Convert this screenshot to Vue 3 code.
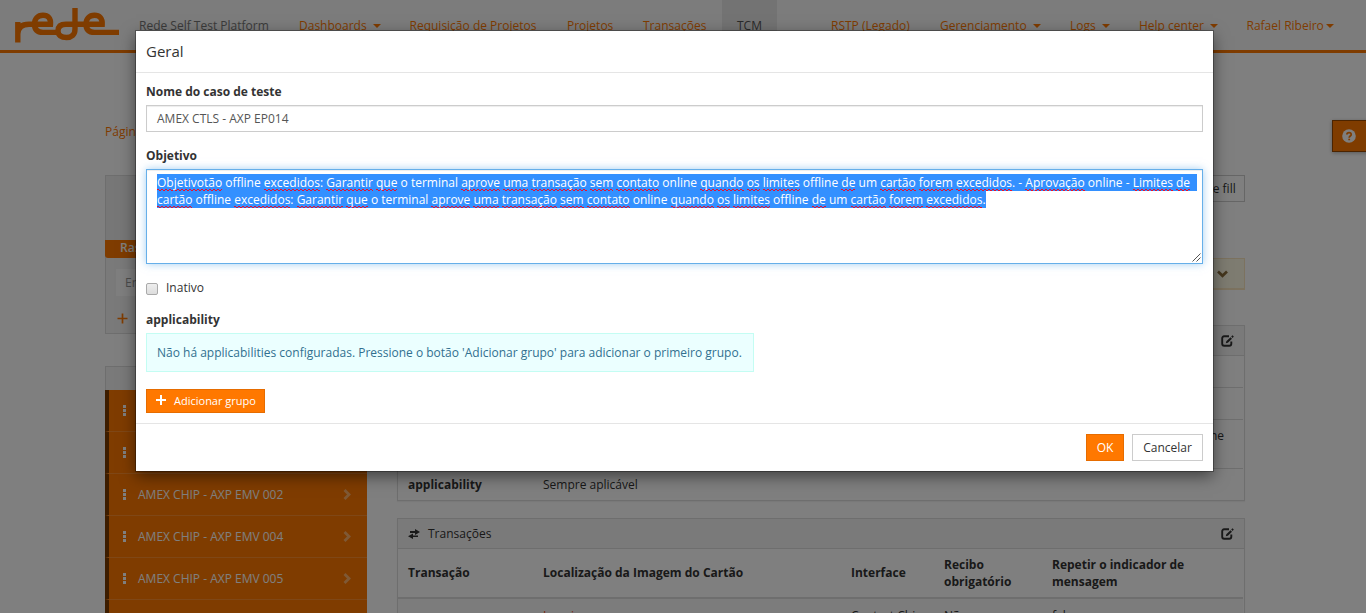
<script setup>
const leftNav = [
  { t: 'Rede Self Test Platform', w: 160, brand: true },
  { t: 'Dashboards', w: 110.5, caret: true },
  { t: 'Requisição de Projetos', w: 157.5 },
  { t: 'Projetos', w: 76 },
  { t: 'Transações', w: 94 },
  { t: 'TCM', w: 55, active: true }
]
const rightNav = [
  { t: 'RSTP (Legado)', w: 109 },
  { t: 'Gerenciamento', w: 130, caret: true },
  { t: 'Logs', w: 69, caret: true },
  { t: 'Help center', w: 107.5, caret: true },
  { t: 'Rafael Ribeiro', w: 120, caret: true, tight: true }
]
const cases = ['AMEX CHIP - AXP EMV 000', 'AMEX CHIP - AXP EMV 001', 'AMEX CHIP - AXP EMV 002', 'AMEX CHIP - AXP EMV 004', 'AMEX CHIP - AXP EMV 005']
const known = ['offline', 'o', 'terminal', 'online', 'um', '-']
const split = s => s.split(' ').map(w => {
  const m = w.match(/^(.*?)([:.]?)$/)
  return { word: m[1], tail: m[2], bad: !known.includes(m[1]) }
})
const lines = [
  split('Objetivotão offline excedidos: Garantir que o terminal aprove uma transação sem contato online quando os limites offline de um cartão forem excedidos. - Aprovação online - Limites de'),
  split('cartão offline excedidos: Garantir que o terminal aprove uma transação sem contato online quando os limites offline de um cartão forem excedidos.')
]
</script>

<template>
  <div class="page">
    <header class="navbar">
      <svg class="logo" width="124" height="50" viewBox="0 0 124 50" fill="none" stroke="#ff7800" stroke-width="5.4">
        <path d="M17.8 42.5V22M17.8 34C18 27 22 24.3 29 24.3H50.5C51 18.5 48 15.2 43 15.2C37.500 15.200 34.500 19 34.500 24C34.500 29.500 37.500 32.400 43 32.400H56" />
        <path d="M75 8V29C75 35 71.500 37.500 66.500 37.500C61 37.500 58 35 58 31C58 26.500 61 24.300 66 24.300H102.200C102.500 18.500 99.500 15.200 94.500 15.200C89 15.200 86 19 86 24C86 29.500 89 32.400 94.500 32.400H119" />
      </svg>
      <nav class="nav">
        <a v-for="n in leftNav" :key="n.t" :class="{ brand: n.brand, active: n.active }" :style="{ width: n.w + 'px' }">{{ n.t }}<i v-if="n.caret" class="caret"></i></a>
      </nav>
      <nav class="nav right">
        <a v-for="n in rightNav" :key="n.t" :style="{ width: n.w + 'px' }">{{ n.t }}<i v-if="n.caret" class="caret" :class="{ tight: n.tight }"></i></a>
      </nav>
    </header>

    <div class="help">
      <svg width="14" height="14" viewBox="0 0 14 14"><circle cx="7" cy="7" r="6.8" fill="#fff" /><path d="M4.900 5.500C5 3 9.200 3 9.200 5.400C9.200 7 7.200 7 7.200 8.700M7.200 9.700V11.300" fill="none" stroke="#ff7800" stroke-width="1.8" /></svg>
    </div>

    <main class="cols">
      <aside class="side">
        <div class="crumb">Página inicial</div>
        <div class="well">
          <div class="blank"></div>
          <div class="status">Rascunho</div>
          <div class="tags">
            <div class="field">Enter a tag</div>
            <svg width="11" height="11" viewBox="0 0 11 11"><path d="M5.500 0.500V10.500M0.500 5.500H10.500" stroke="#ff7800" stroke-width="1.700" /></svg>
          </div>
        </div>
        <div class="list">
          <div class="list-head"></div>
          <div v-for="c in cases" :key="c" class="case">
            <svg class="dots" width="3" height="11" viewBox="0 0 3 11" fill="#fff"><path d="M0 0H3V3H0ZM0 4H3V7H0ZM0 8H3V11H0Z" /></svg>
            <span>{{ c }}</span>
            <svg class="chev" width="9" height="11" viewBox="0 0 9 11"><path d="M1.500 1L6 5.500L1.500 10" fill="none" stroke="#ffb26b" stroke-width="2.800" /></svg>
          </div>
          <div class="case"></div>
        </div>
      </aside>

      <section class="content">
        <div class="fill-btn">Auto-complete fill</div>
        <div class="warn"><svg width="11" height="8" viewBox="0 0 11 8"><path d="M1 1.500L5.500 5.800L10 1.500" fill="none" stroke="#8a6d3b" stroke-width="2.700" /></svg></div>
        <div class="panel first">
          <div class="phead"><span></span>
            <svg class="edit" width="13" height="12" viewBox="0 0 13 12"><path d="M8 1.300H3.200Q1.200 1.300 1.200 3.300V8.800Q1.200 10.800 3.200 10.800H8.300Q10.300 10.800 10.300 8.800V6.500" fill="none" stroke="#333" stroke-width="1.900" /><path d="M4.800 8.300L5.300 6.300L9.500 2.200L11 3.700L6.900 7.700ZM10.200 1.500L11.500 0.300L12.800 1.600L11.600 2.900Z" fill="#333" /></svg>
          </div>
          <div class="row r1"></div>
          <div class="row r1"></div>
          <div class="row r2">ne</div>
          <div class="row r3"><b>applicability</b><span>Sempre aplicável</span></div>
        </div>
        <div class="panel second">
          <div class="phead">
            <span class="ptitle"><svg width="12" height="10" viewBox="0 0 12 10" fill="#333"><path d="M2 2H7V0L12 3L7 6V4H2ZM10 6.500H5V4.500L0 7.300L5 10V8H10Z" /></svg>Transações</span>
            <svg class="edit" width="13" height="12" viewBox="0 0 13 12"><path d="M8 1.300H3.200Q1.200 1.300 1.200 3.300V8.800Q1.200 10.800 3.200 10.800H8.300Q10.300 10.800 10.300 8.800V6.500" fill="none" stroke="#333" stroke-width="1.900" /><path d="M4.800 8.300L5.300 6.300L9.500 2.200L11 3.700L6.900 7.700ZM10.200 1.500L11.500 0.300L12.800 1.600L11.600 2.900Z" fill="#333" /></svg>
          </div>
          <div class="tr th"><span>Transação</span><span>Localização da Imagem do Cartão</span><span>Interface</span><span>Recibo<br>obrigatório</span><span>Repetir o indicador de<br>mensagem</span></div>
          <div class="tr td"><span></span><span class="link">Inserir</span><span>Contact Chip</span><span>Não</span><span>false</span></div>
        </div>
      </section>
    </main>

    <div class="backdrop"></div>

    <div class="modal">
      <div class="mhead">Geral</div>
      <div class="mbody">
        <label class="lab">Nome do caso de teste</label>
        <div class="input">AMEX CTLS - AXP EP014</div>
        <label class="lab l2">Objetivo</label>
        <div class="area">
          <div v-for="(l, i) in lines" :key="i" class="line" :class="'n' + i"><template v-for="(w, j) in l" :key="j"><span :class="{ bad: w.bad }">{{ w.word }}</span>{{ w.tail }}{{ j < l.length - 1 ? ' ' : '' }}</template></div>
          <svg class="grip" width="9" height="9" viewBox="0 0 9 9"><path d="M0.500 8.500L8.500 0.500M4.500 8.500L8.500 4.500" stroke="#555" stroke-width="1" /></svg>
        </div>
        <div class="check"><i></i><span>Inativo</span></div>
        <label class="lab l3">applicability</label>
        <div class="info"><span>Não há applicabilities configuradas. Pressione o botão 'Adicionar grupo' para adicionar o primeiro grupo.</span></div>
        <div class="add"><svg width="10" height="10" viewBox="0 0 10 10"><path d="M5 0V10M0 5H10" stroke="#fff" stroke-width="2" /></svg><span>Adicionar grupo</span></div>
      </div>
      <div class="mfoot"><div class="btn ok">OK</div><div class="btn cancel">Cancelar</div></div>
    </div>
  </div>
</template>

<style>
body { margin: 0; overflow: hidden; background: #fff; }
</style>

<style scoped>
* { box-sizing: border-box; }
.page { position: relative; width: 1366px; height: 613px; overflow: hidden; background: #fff; font: 12px/17px "Open Sans", sans-serif; color: #333; white-space: nowrap; }
.navbar { display: flex; height: 53px; background: #f8f8f8; border-bottom: 3px solid #ff7800; }
.logo { flex: none; }
.nav { display: flex; }
.right { margin-left: 39px; }
.nav a { padding: 17px 0 0 15px; color: #ff7800; flex: none; }
.nav a.brand { color: #777; }
.nav a.active { background: #e7e7e7; color: #555; }
.caret { display: inline-block; border: 4px solid transparent; border-top-color: #ff7800; border-bottom: 0; margin: 0 0 2px 6px; vertical-align: middle; }
.caret.tight { margin-left: 2px; }
.help { position: absolute; top: 120px; right: -8px; width: 42px; height: 32px; padding: 8px 9px; background: #ff7800; border: 1px solid #994800; box-shadow: 0 1px 4px rgba(0,0,0,.3); }
.help svg { display: block; }
.cols { display: flex; gap: 30px; padding-left: 105px; }
.side { width: 262px; flex: none; }
.crumb { margin-top: 70px; color: #ff7800; height: 17px; }
.well { margin-top: 35px; height: 159px; background: #f5f5f5; border: 1px solid #ddd; }
.blank { height: 64px; background: #eee; }
.status { width: 90px; height: 18px; margin-left: -1px; padding-left: 15px; background: #ff7800; color: #fff; font-weight: 600; line-height: 16px; border-radius: 0 0 2px 3px; }
.tags { padding: 11px 10px; }
.field { width: 200px; height: 27px; background: #fff; color: #999; padding: 5px 9px; }
.tags svg { display: block; margin: 17px 0 0 1px; }
.list { margin-top: 32px; }
.list-head { height: 24px; border: 1px solid #ddd; border-bottom: 0; background: #f5f5f5; }
.case { display: flex; align-items: center; height: 42px; padding-left: 14px; color: #fff; background: #ff7800; border-left: 4px solid #7a3a00; border-bottom: 1px solid #ff8f2c; }
.dots { margin-right: 12px; }
.chev { margin: 0 15px 0 auto; }
.content { width: 848px; flex: none; }
.fill-btn { margin: 122px 0 0 auto; width: 120px; height: 27px; border: 1px solid #ccc; text-align: right; padding: 4px 11px; }
.warn { margin-top: 56px; height: 32px; background: #fcf8e3; border: 1px solid #f8e5be; border-bottom-width: 2px; display: flex; justify-content: flex-end; align-items: center; padding-right: 16px; }
.panel { border: 1px solid #ddd; box-shadow: 0 1px 1px rgba(0,0,0,.05); }
.first { margin-top: 35px; height: 176px; }
.second { margin-top: 17px; height: 110px; }
.phead { display: flex; justify-content: space-between; align-items: center; height: 30px; padding: 0 10px; background: #f5f5f5; border-bottom: 1px solid #ddd; }
.ptitle { display: flex; align-items: center; }
.ptitle svg { margin-right: 8px; }
.row { margin-right: 1px; border-bottom: 1px solid #ddd; }
.r1 { height: 32px; }
.r2 { height: 49px; text-align: right; padding: 7px 19px; }
.r3 { height: 31px; display: grid; grid-template-columns: 135px 1fr; padding: 7px 10px; border: 0; }
.tr { display: grid; grid-template-columns: 135px 308px 93px 108px 1fr; padding: 0 0 0 10px; margin-right: 1px; }
.th { height: 50px; padding-bottom: 1px; align-items: center; font-weight: 700; border-bottom: 2px solid #ddd; }
.td { padding-top: 8px; height: 30px; background: #f9f9f9; }
.link { color: #f04e23; }
.backdrop { position: absolute; inset: 0; background: rgba(0,0,0,.5); }
.modal { position: absolute; left: 136px; top: 31px; width: 1077px; height: 440px; background: #fff; box-shadow: 0 0 0 1px rgba(0,0,0,.3), 0 5px 15px rgba(0,0,0,.5); }
.mhead { height: 42px; padding: 10px; font-size: 15px; line-height: 21px; border-bottom: 1px solid #e5e5e5; }
.mbody { height: 350px; padding: 10px; }
.lab { display: block; font-weight: 700; height: 22px; }
.input { height: 27px; padding: 4px 10px; border: 1px solid #ccc; color: #555; box-shadow: inset 0 1px 1px rgba(0,0,0,.075); }
.l2 { margin-top: 15px; }
.area { position: relative; height: 95px; padding: 4px 10px; border: 1px solid #66afe9; box-shadow: inset 0 1px 1px rgba(0,0,0,.075), 0 0 8px rgba(102,175,233,.6); }
.line { height: 17px; background: #3390ff; color: #fff; width: fit-content; }
.n0 { width: 1040px; }
.bad { background: conic-gradient(from 0deg at 2px 1px, transparent 25%, #e8112d 0 50%, transparent 0 75%, #e8112d 0) 0 100% / 4px 2px repeat-x; }
.grip { position: absolute; right: 1px; bottom: 1px; }
.check { display: flex; align-items: center; height: 17px; margin-top: 15px; }
.check i { width: 12px; height: 12px; margin: 3px 8px 0 0; border: 1px solid #aaa; border-radius: 2px; background: linear-gradient(#eee, #ddd); }
.l3 { margin-top: 15px; }
.info { width: 608px; height: 39px; padding: 10px; background: #ebffff; border: 1px solid #c4fdf3; color: #31708f; }
.add { display: flex; align-items: center; width: 119px; height: 24px; margin-top: 17px; padding: 0 0 1px 9px; background: #ff7800; border: 1px solid #e66c00; color: #fff; font-size: 11px; line-height: 16px; }
.add svg { margin: -1px 8px 0 0; }
.mfoot { display: flex; justify-content: flex-end; gap: 8px; padding: 10px; border-top: 1px solid #e5e5e5; }
.btn { height: 27px; border: 1px solid #ccc; text-align: center; line-height: 25px; }
.ok { width: 38px; background: #ff7800; border-color: #e66c00; color: #fff; }
.cancel { width: 71px; }
</style>
